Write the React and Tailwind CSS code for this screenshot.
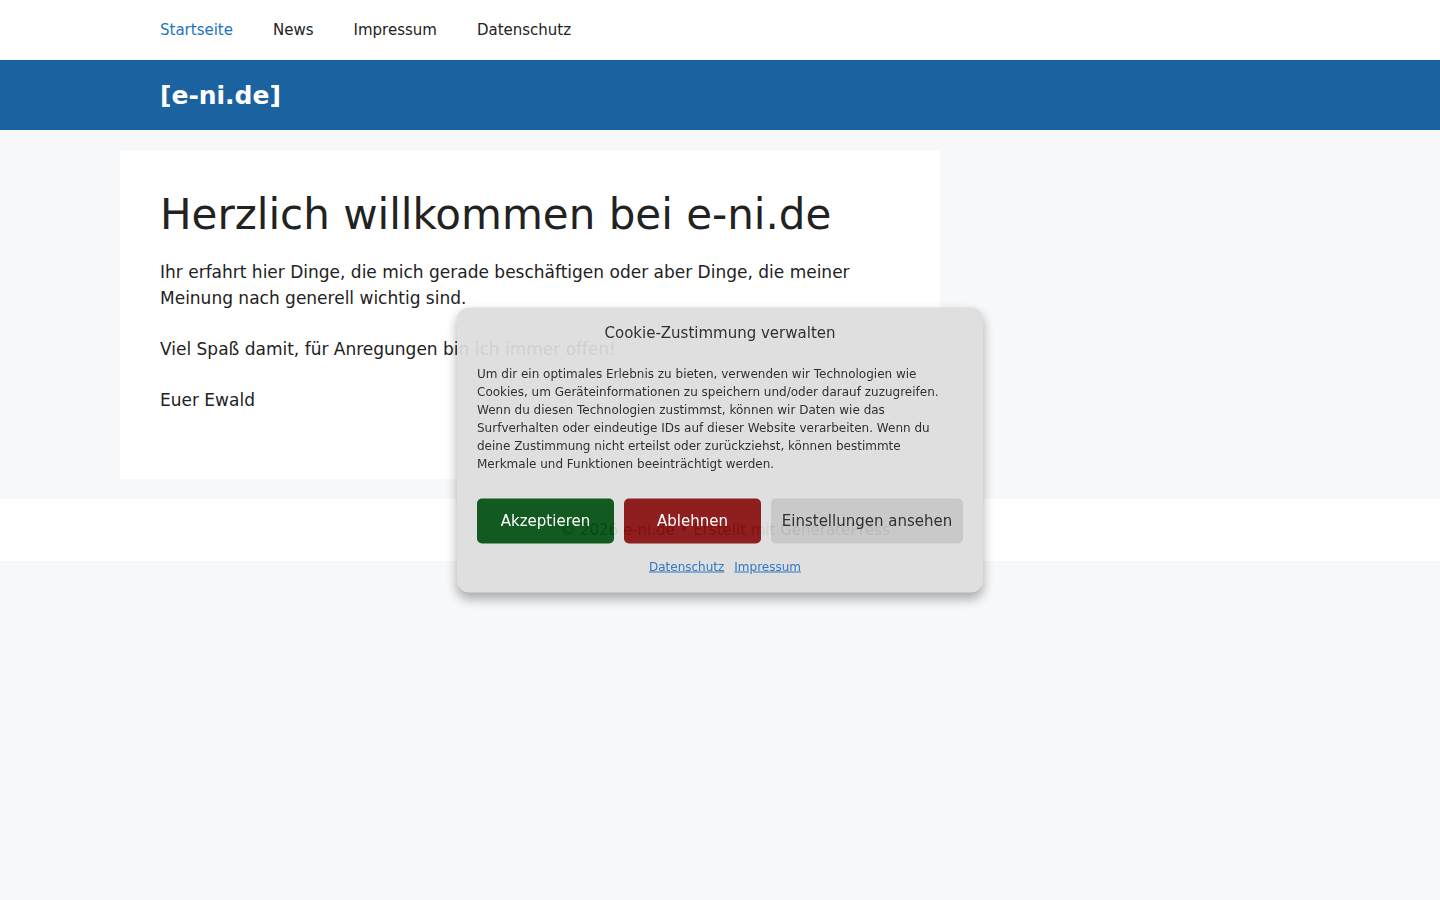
import React from "react";

const font = { fontFamily: '"DejaVu Sans", "Noto Sans", sans-serif' };

function TopNav() {
  const items = ["Startseite", "News", "Impressum", "Datenschutz"];
  return (
    <nav className="bg-white h-[60px]">
      <div className="w-[1200px] mx-auto px-[20px] flex h-full">
        {items.map((label, i) => (
          <a
            key={label}
            href="#"
            className={`px-[20px] h-full flex items-center text-[15px] ${
              i === 0 ? "text-[#1e73be]" : "text-[#222222]"
            }`}
          >
            {label}
          </a>
        ))}
      </div>
    </nav>
  );
}

function SiteHeader() {
  return (
    <header className="bg-[#1b62a0] h-[70px]">
      <div className="w-[1200px] mx-auto px-[40px] h-full flex items-center">
        <span className="text-white font-bold text-[25px] leading-none">[e-ni.de]</span>
      </div>
    </header>
  );
}

function Content() {
  return (
    <div className="w-[1200px] mx-auto pt-[20px] pb-[20px] flex">
      <article className="w-[820px] bg-white p-[40px] text-[#222222]">
        <h1 className="text-[42px] leading-[1.2] font-normal mb-[20px]">
          Herzlich willkommen bei e-ni.de
        </h1>
        <p className="text-[17px] leading-[1.5] mb-[25.5px]">
          Ihr erfahrt hier Dinge, die mich gerade beschäftigen oder aber Dinge, die meiner
          Meinung nach generell wichtig sind.
        </p>
        <p className="text-[17px] leading-[1.5] mb-[25.5px]">
          Viel Spaß damit, für Anregungen bin ich immer offen!
        </p>
        <p className="text-[17px] leading-[1.5] mb-[25.5px]">Euer Ewald</p>
      </article>
    </div>
  );
}

function Footer() {
  return (
    <footer className="bg-white h-[62px] flex items-center justify-center pl-[10px] text-[15px] text-[#222222]">
      © 2026 e-ni.de • Erstellt mit GeneratePress
    </footer>
  );
}

function CookieBanner() {
  return (
    <div className="fixed left-1/2 top-1/2 -translate-x-1/2 -translate-y-1/2 w-[526px] h-[285px] rounded-[12px] bg-[#dddddd] opacity-[0.93] shadow-[0_6px_12px_rgba(0,0,0,0.35)] px-[20px] pt-[13px] pb-[18px] text-[#222222]">
      <div className="text-center text-[15px] leading-[24px]">Cookie-Zustimmung verwalten</div>
      <p className="mt-[20px] text-[12px] leading-[18px]">
        Um dir ein optimales Erlebnis zu bieten, verwenden wir Technologien wie Cookies, um
        Geräteinformationen zu speichern und/oder darauf zuzugreifen. Wenn du diesen
        Technologien zustimmst, können wir Daten wie das Surfverhalten oder eindeutige IDs auf
        dieser Website verarbeiten. Wenn du deine Zustimmung nicht erteilst oder zurückziehst,
        können bestimmte Merkmale und Funktionen beeinträchtigt werden.
      </p>
      <div className="mt-[26px] flex gap-[10px]">
        <button className="w-[137px] h-[45px] rounded-[5px] bg-[#004e10] text-white text-[15px]">
          Akzeptieren
        </button>
        <button className="w-[137px] h-[45px] rounded-[5px] bg-[#870e0e] text-white text-[15px]">
          Ablehnen
        </button>
        <button className="w-[192px] h-[45px] rounded-[5px] bg-[#c5c5c5] text-[#222222] text-[15px]">
          Einstellungen ansehen
        </button>
      </div>
      <div className="mt-[14px] flex justify-center gap-[10px] pl-[10px] text-[12px] leading-[18px]">
        <a href="#" className="underline text-[#236ebd]">Datenschutz</a>
        <a href="#" className="underline text-[#236ebd]">Impressum</a>
      </div>
    </div>
  );
}

export default function App() {
  return (
    <div className="min-h-[900px] bg-[#f7f8f9]" style={font}>
      <TopNav />
      <SiteHeader />
      <Content />
      <Footer />
      <CookieBanner />
    </div>
  );
}
